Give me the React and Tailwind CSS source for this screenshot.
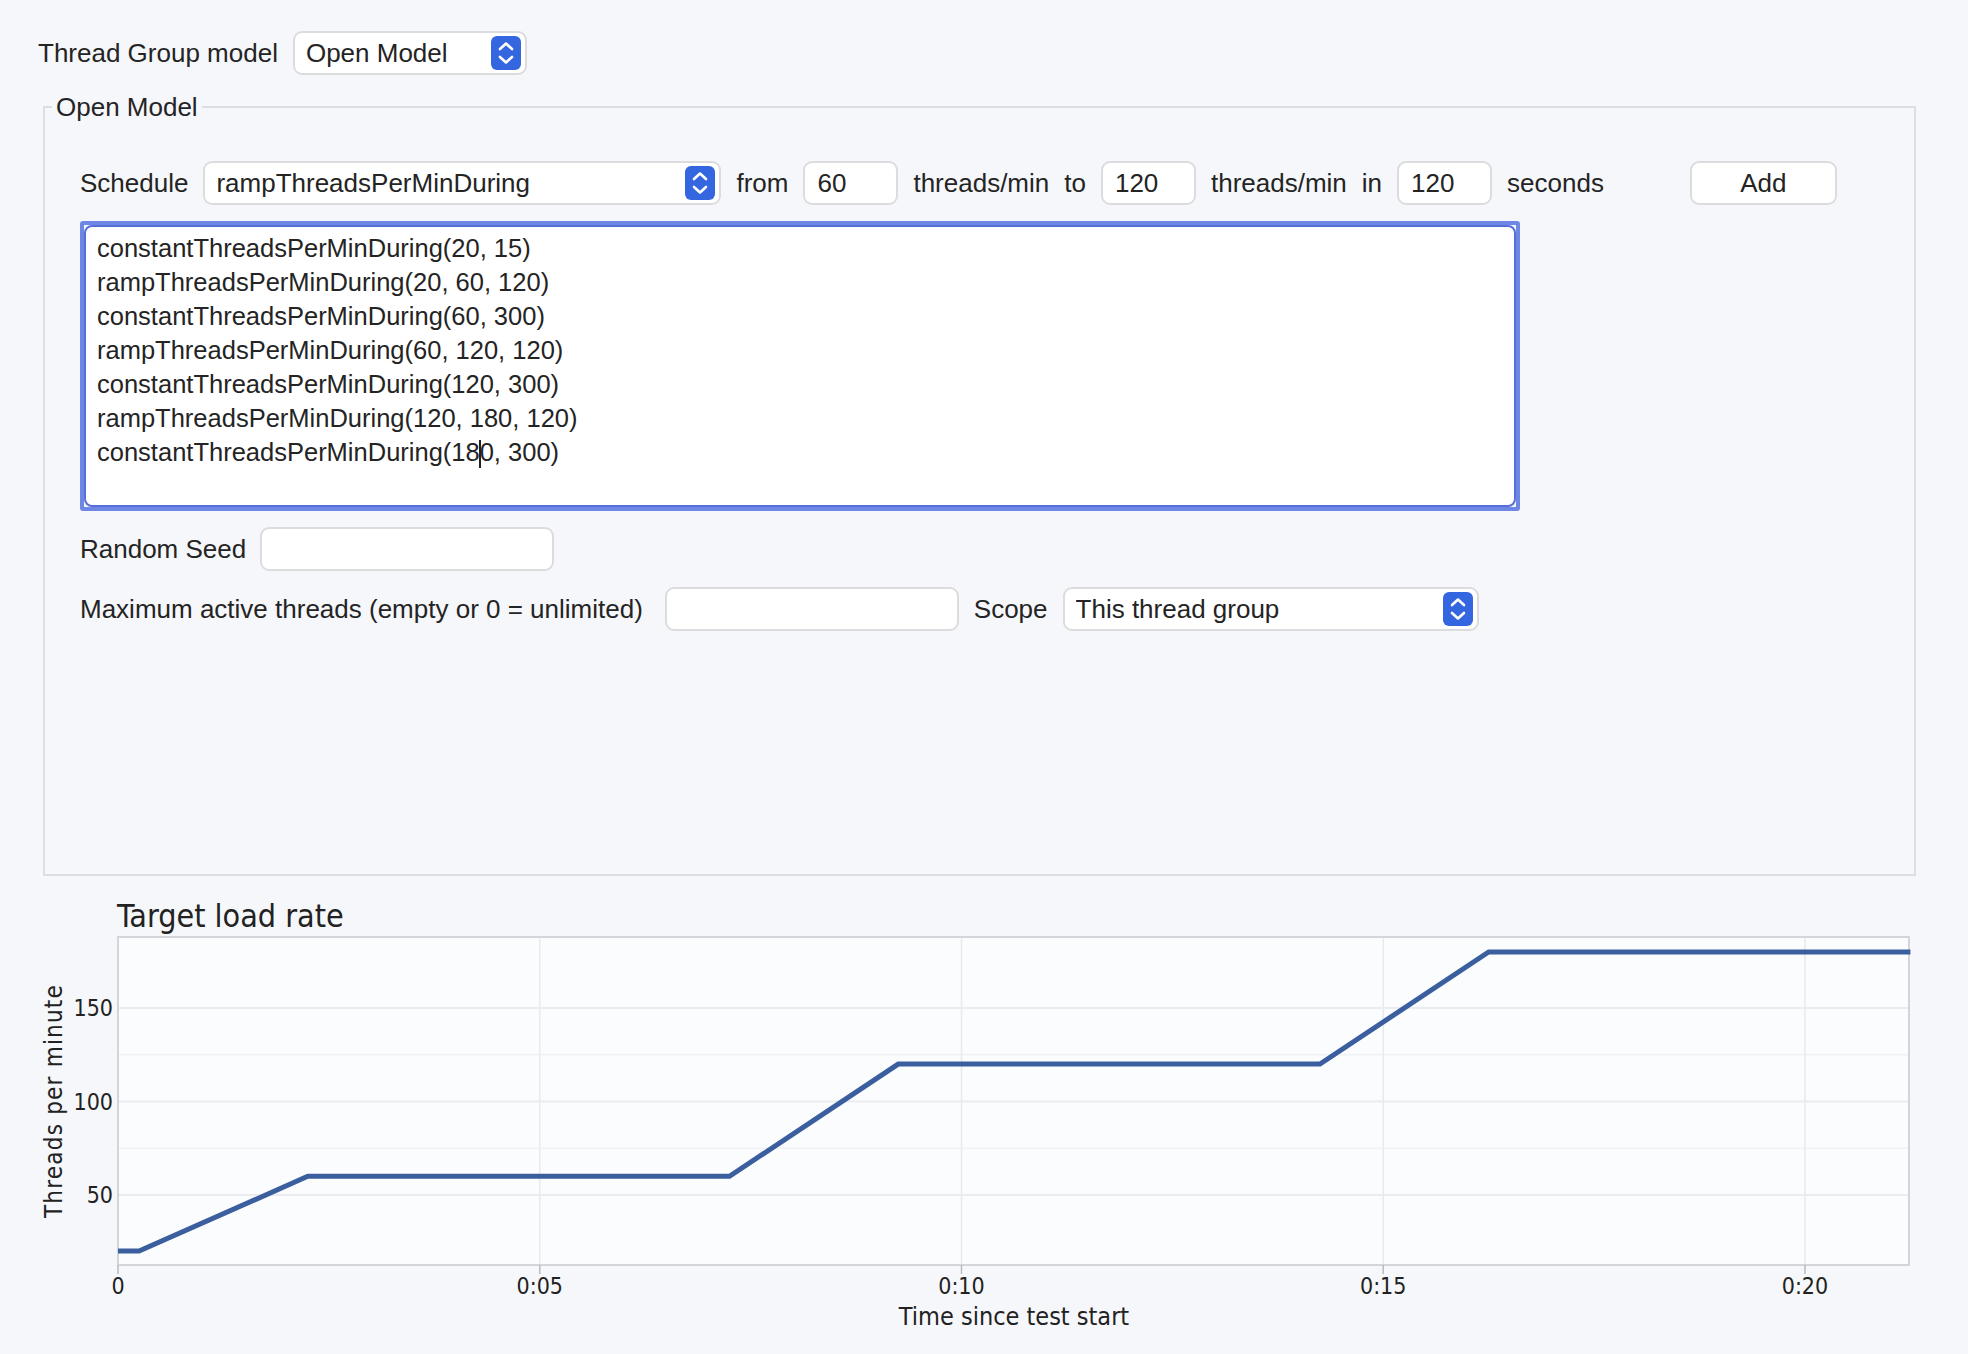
import React from "react";

function Stepper() {
  return (
    <svg width="30" height="34" viewBox="0 0 30 34" className="shrink-0">
      <rect x="0" y="0" width="30" height="34" rx="6" fill="#3466e0" />
      <path d="M9 13 L15 7.5 L21 13" fill="none" stroke="#fff" strokeWidth="2.6" strokeLinecap="round" strokeLinejoin="round" />
      <path d="M9 21 L15 26.5 L21 21" fill="none" stroke="#fff" strokeWidth="2.6" strokeLinecap="round" strokeLinejoin="round" />
    </svg>
  );
}

function Select({ value, width }) {
  return (
    <div
      className="h-[44px] flex items-center justify-between pl-[11px] pr-[4px] bg-white border-2 border-[#dcdcde] rounded-[9px]"
      style={{ width }}
    >
      <span className="truncate">{value}</span>
      <Stepper />
    </div>
  );
}

function Field({ value, width }) {
  return (
    <div
      className="h-[44px] flex items-center px-[12px] bg-white border-2 border-[#dcdcde] rounded-[9px]"
      style={{ width }}
    >
      {value}
    </div>
  );
}

const lines = [
  "constantThreadsPerMinDuring(20, 15)",
  "rampThreadsPerMinDuring(20, 60, 120)",
  "constantThreadsPerMinDuring(60, 300)",
  "rampThreadsPerMinDuring(60, 120, 120)",
  "constantThreadsPerMinDuring(120, 300)",
  "rampThreadsPerMinDuring(120, 180, 120)",
];

// schedule points: seconds, threads/min
const pts = [
  [0, 20], [15, 20], [135, 60], [435, 60], [555, 120], [855, 120], [975, 180], [1275, 180],
];
const px = (t) => 118 + t * 1.4058;
const py = (v) => 1288.5 - v * 1.87;

function Chart() {
  const chartFont = "[font-family:'DejaVu_Sans_Condensed','DejaVu_Sans',sans-serif]";
  return (
    <svg width="1968" height="478" viewBox="0 876 1968 478" className={`block ${chartFont}`}>
      <text x="117" y="927" fontSize="32" fill="#222" style={{ fontStretch: "condensed" }}>
        Target load rate
      </text>
      <rect x="118" y="937" width="1791" height="328" fill="#fbfcfe" stroke="#d3d5da" strokeWidth="2" />
      {[50, 100, 150].map((v) => (
        <line key={v} x1="119" x2="1908" y1={py(v)} y2={py(v)} stroke="#eaecef" strokeWidth="2" />
      ))}
      {[75, 125].map((v) => (
        <line key={v} x1="119" x2="1908" y1={py(v)} y2={py(v)} stroke="#f0f1f4" strokeWidth="1.5" />
      ))}
      {[300, 600, 900, 1200].map((t) => (
        <line key={t} x1={px(t)} x2={px(t)} y1="938" y2="1264" stroke="#e8eaee" strokeWidth="1.5" />
      ))}
      {[0, 300, 600, 900, 1200].map((t) => (
        <line key={"k" + t} x1={px(t)} x2={px(t)} y1="1265" y2="1274" stroke="#b8bbc1" strokeWidth="1.5" />
      ))}
      <polyline
        points={pts.map(([t, v]) => `${px(t)},${py(v)}`).join(" ")}
        fill="none"
        stroke="#3a5e9e"
        strokeWidth="5"
        strokeLinejoin="miter"
      />
      {[
        [0, "0"], [300, "0:05"], [600, "0:10"], [900, "0:15"], [1200, "0:20"],
      ].map(([t, l]) => (
        <text key={l} x={px(t)} y="1294" fontSize="23" fill="#222" textAnchor="middle" style={{ fontStretch: "condensed" }}>
          {l}
        </text>
      ))}
      {[150, 100, 50].map((v) => (
        <text key={v} x="113" y={py(v) + 8} fontSize="23" fill="#222" textAnchor="end" style={{ fontStretch: "condensed" }}>
          {v}
        </text>
      ))}
      <text x="1014" y="1325" fontSize="25" fill="#222" textAnchor="middle" style={{ fontStretch: "condensed" }}>
        Time since test start
      </text>
      <text
        x="54"
        y="1101"
        fontSize="24"
        fill="#222"
        textAnchor="middle"
        dominantBaseline="central"
        transform="rotate(-90 54 1101)"
        letterSpacing="1.2"
      >
        Threads per minute
      </text>
    </svg>
  );
}

export default function App() {
  return (
    <div className="w-[1968px] h-[1354px] overflow-hidden bg-[#f6f7fa] text-[26px] text-[#242424] [font-family:'Liberation_Sans',Arial,sans-serif]">
      {/* model selector */}
      <div className="flex items-center gap-[15px] pl-[38px] pt-[31px]">
        <span>Thread Group model</span>
        <Select value="Open Model" width={234} />
      </div>

      {/* open model group */}
      <fieldset className="ml-[43px] mt-[17px] w-[1873px] h-[784px] border-2 border-[#dcdee3]">
        <legend className="ml-[7px] px-[4px] leading-[30px]">Open Model</legend>
        <div className="pl-[35px] pt-[39px] flex flex-col gap-[16px]">
          <div className="flex items-center gap-[15px] whitespace-nowrap">
            <span>Schedule</span>
            <Select value="rampThreadsPerMinDuring" width={518} />
            <span>from</span>
            <Field value="60" width={95} />
            <span>threads/min</span>
            <span>to</span>
            <Field value="120" width={95} />
            <span>threads/min</span>
            <span>in</span>
            <Field value="120" width={95} />
            <span>seconds</span>
            <button className="ml-[71px] h-[44px] w-[147px] bg-white border-2 border-[#dcdcde] rounded-[9px]">
              Add
            </button>
          </div>

          <div className="w-[1440px] h-[290px] border-[4px] border-[#6e86e4] rounded-[3px] p-0">
            <div className="w-full h-full bg-white border-2 border-[#5470d8] rounded-[8px] pl-[11px] pt-[4px] leading-[34px] text-[25.5px]">
              {lines.map((l) => (
                <div key={l}>{l}</div>
              ))}
              <div>
                constantThreadsPerMinDuring(18
                <span className="inline-block w-[2px] h-[28px] bg-[#222] align-middle -mx-[1px]"></span>
                0, 300)
              </div>
            </div>
          </div>

          <div className="flex items-center gap-[14px]">
            <span>Random Seed</span>
            <Field value="" width={294} />
          </div>

          <div className="flex items-center gap-[15px] whitespace-nowrap">
            <span className="mr-[7px]">Maximum active threads (empty or 0 = unlimited)</span>
            <Field value="" width={294} />
            <span>Scope</span>
            <Select value="This thread group" width={416} />
          </div>
        </div>
      </fieldset>

      <Chart />
    </div>
  );
}
